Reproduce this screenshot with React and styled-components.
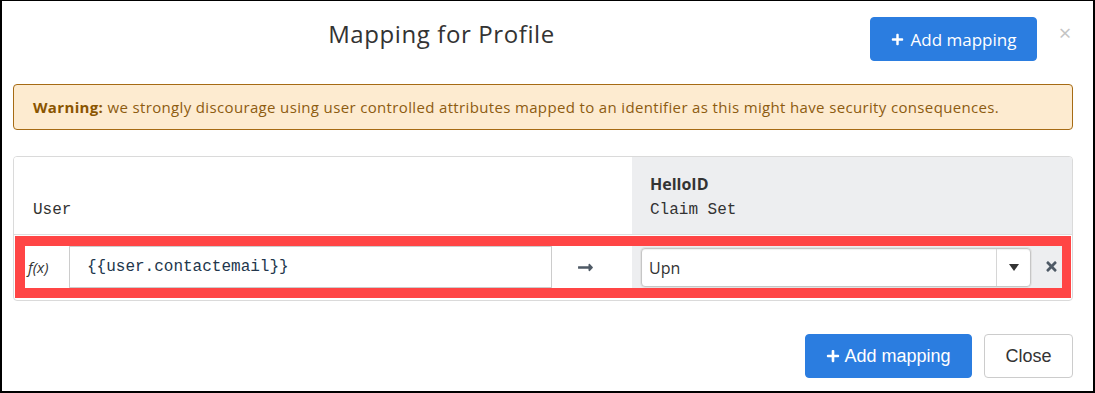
import styled, { createGlobalStyle } from "styled-components";
import { FaPlus, FaTimes, FaLongArrowAltRight } from "react-icons/fa";

const GlobalStyle = createGlobalStyle`
  html, body {
    margin: 0;
    padding: 0;
    background: #fff;
  }
  * {
    box-sizing: border-box;
  }
`;

const Frame = styled.div`
  width: 1095px;
  height: 393px;
  border: 2px solid #000;
  border-top-width: 1px;
  padding: 16px 20px 0 11px;
  background: #fff;
  font-family: "Open Sans", "Noto Sans", sans-serif;
  color: #333;
  overflow: hidden;
`;

const Header = styled.div`
  display: flex;
  align-items: flex-start;
`;

const Title = styled.h4`
  flex: 1;
  margin: 0;
  text-align: center;
  font-size: 24px;
  font-weight: 400;
  letter-spacing: 0.6px;
  line-height: 34px;
  color: #333;
`;

const Button = styled.button`
  display: flex;
  align-items: center;
  justify-content: center;
  gap: ${(p) => (p.$face === "arial" ? "4px" : "7px")};
  width: ${(p) => p.$width};
  height: 44px;
  border-radius: 4px;
  border: 1px solid ${(p) => (p.$primary ? "#2b7de0" : "#cccccc")};
  background: ${(p) => (p.$primary ? "#2b7de0" : "#fff")};
  color: ${(p) => (p.$primary ? "#fff" : "#333")};
  font-family: ${(p) =>
    p.$face === "arial"
      ? `"Liberation Sans", Arial, sans-serif`
      : `"Open Sans", "Noto Sans", sans-serif`};
  font-size: ${(p) => (p.$face === "arial" ? "18px" : "17px")};
  padding: 0;
  cursor: pointer;
`;

const CloseX = styled.span`
  width: 16px;
  margin-left: 20px;
  line-height: 30px;
  text-align: center;
  font-size: 22px;
  color: #c4c4c4;
`;

const Warning = styled.div`
  margin-top: 23px;
  height: 46px;
  padding: 0 19px;
  border: 1px solid #a66b14;
  border-radius: 4px;
  background: #fdebd0;
  color: #8d5c10;
  font-size: 15px;
  letter-spacing: 0.35px;
  line-height: 44px;
  white-space: nowrap;
  b {
    font-weight: 700;
    color: #8a5500;
  }
`;

const Table = styled.div`
  margin-top: 26px;
  border: 1px solid #dadada;
  border-radius: 4px;
  overflow: hidden;
`;

const HeadRow = styled.div`
  display: grid;
  grid-template-columns: 618px 1fr;
  height: 78px;
  border-bottom: 1px solid #dedede;
`;

const HeadCell = styled.div`
  display: flex;
  flex-direction: column;
  justify-content: flex-end;
  padding: 0 0 11px ${(p) => p.$pad};
  background: ${(p) => (p.$shaded ? "#edeef0" : "#fff")};
`;

const HeadTitle = styled.div`
  font-size: 16px;
  font-weight: 700;
  line-height: 26px;
  color: #333;
`;

const Mono = styled.div`
  font-family: "Liberation Mono", "DejaVu Sans Mono", monospace;
  font-size: 16px;
  line-height: 26px;
  color: #333;
`;

const HighlightRow = styled.div`
  display: grid;
  grid-template-columns: 44px 483px 80px 1fr;
  margin: 1px 1px 2px 1px;
  border: 10px solid #ff4545;
  height: 62px;
`;

const FxCell = styled.div`
  display: flex;
  align-items: center;
  padding-left: 3px;
  background: #fff;
  font-style: italic;
  font-size: 15px;
  color: #333;
`;

const ExprInput = styled.div`
  display: flex;
  align-items: center;
  padding-left: 17px;
  border: 1px solid #cccccc;
  background: #fff;
  font-family: "Liberation Mono", "DejaVu Sans Mono", monospace;
  font-size: 16px;
  color: #22364c;
`;

const ArrowCell = styled.div`
  display: flex;
  align-items: center;
  padding-left: 25px;
  background: #fff;
  color: #4f5a66;
`;

const TargetCell = styled.div`
  display: flex;
  align-items: flex-start;
  padding: 2px 0 0 9px;
  background: #edeef0;
`;

const Select = styled.div`
  display: flex;
  width: 390px;
  height: 39px;
  border: 1px solid #c6c6c6;
  border-radius: 4px;
  background: #fff;
  box-shadow: inset 0 1px 1px rgba(0, 0, 0, 0.06), 0 0 0 1px #e2e2e2;
`;

const SelectValue = styled.div`
  flex: 1;
  display: flex;
  align-items: center;
  padding-left: 7px;
  font-size: 16px;
  color: #333;
`;

const Caret = styled.div`
  width: 34px;
  display: flex;
  align-items: center;
  justify-content: center;
  border-left: 1px solid #d6d6d6;
  &::after {
    content: "";
    border-left: 5px solid transparent;
    border-right: 5px solid transparent;
    border-top: 7px solid #333;
  }
`;

const RemoveCell = styled.div`
  width: 31px;
  height: 39px;
  display: flex;
  align-items: center;
  padding: 0 0 2px 13px;
  color: #4f5a66;
`;

const Footer = styled.div`
  display: flex;
  justify-content: flex-end;
  gap: 12px;
  margin-top: 33px;
`;

export default function App() {
  return (
    <>
      <GlobalStyle />
      <Frame>
        <Header>
          <Title>Mapping for Profile</Title>
          <Button $primary $width="167px">
            <FaPlus size={13} />
            Add mapping
          </Button>
          <CloseX>×</CloseX>
        </Header>

        <Warning>
          <b>Warning:</b> we strongly discourage using user controlled
          attributes mapped to an identifier as this might have security
          consequences.
        </Warning>

        <Table>
          <HeadRow>
            <HeadCell $pad="19px">
              <Mono>User</Mono>
            </HeadCell>
            <HeadCell $pad="18px" $shaded>
              <HeadTitle>HelloID</HeadTitle>
              <Mono>Claim Set</Mono>
            </HeadCell>
          </HeadRow>
          <HighlightRow>
            <FxCell>f(x)</FxCell>
            <ExprInput>{"{{user.contactemail}}"}</ExprInput>
            <ArrowCell>
              <FaLongArrowAltRight size={17} />
            </ArrowCell>
            <TargetCell>
              <Select>
                <SelectValue>Upn</SelectValue>
                <Caret />
              </Select>
              <RemoveCell>
                <FaTimes size={15} />
              </RemoveCell>
            </TargetCell>
          </HighlightRow>
        </Table>

        <Footer>
          <Button $primary $face="arial" $width="167px">
            <FaPlus size={14} />
            Add mapping
          </Button>
          <Button $face="arial" $width="89px">
            Close
          </Button>
        </Footer>
      </Frame>
    </>
  );
}
